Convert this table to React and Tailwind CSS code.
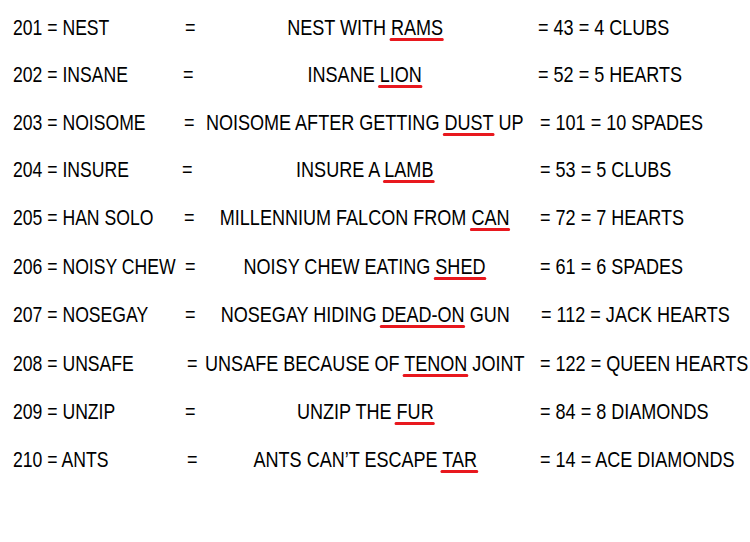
import React from "react";

const rows = [
  { label: "201 = NEST", lw: "w-[172px]", mt: "", mid: ["NEST WITH ", "RAMS", ""], rp: "pl-[3px]", right: "= 43 = 4 CLUBS" },
  { label: "202 = INSANE", lw: "w-[170px]", mt: "-mt-px", mid: ["INSANE ", "LION", ""], rp: "pl-[3px]", right: "= 52 = 5 HEARTS" },
  { label: "203 = NOISOME", lw: "w-[171px]", mt: "", mid: ["NOISOME AFTER GETTING ", "DUST", " UP"], rp: "pl-[5px]", right: "= 101 = 10 SPADES" },
  { label: "204 = INSURE", lw: "w-[169px]", mt: "-mt-px", mid: ["INSURE A ", "LAMB", ""], rp: "pl-[5px]", right: "= 53 = 5 CLUBS" },
  { label: "205 = HAN SOLO", lw: "w-[171px]", mt: "", mid: ["MILLENNIUM FALCON FROM ", "CAN", ""], rp: "pl-[5px]", right: "= 72 = 7 HEARTS" },
  { label: "206 = NOISY CHEW", lw: "w-[172px]", mt: "mt-px", mid: ["NOISY CHEW EATING ", "SHED", ""], rp: "pl-[5px]", right: "= 61 = 6 SPADES" },
  { label: "207 = NOSEGAY", lw: "w-[172px]", mt: "", mid: ["NOSEGAY HIDING ", "DEAD-ON", " GUN"], rp: "pl-[6px]", right: "= 112 = JACK HEARTS" },
  { label: "208 = UNSAFE", lw: "w-[174px]", mt: "mt-px", mid: ["UNSAFE BECAUSE OF ", "TENON", " JOINT"], rp: "pl-[5px]", right: "= 122 = QUEEN HEARTS" },
  { label: "209 = UNZIP", lw: "w-[172px]", mt: "", mid: ["UNZIP THE ", "FUR", ""], rp: "pl-[5px]", right: "= 84 = 8 DIAMONDS" },
  { label: "210 = ANTS", lw: "w-[174px]", mt: "", mid: ["ANTS CAN\u2019T ESCAPE ", "TAR", ""], rp: "pl-[5px]", right: "= 14 = ACE DIAMONDS" },
];

function Underlined({ children }) {
  return (
    <span className="relative">
      {children}
      <span className="absolute left-[-2px] right-[-1px] top-[23px] h-[3px] rounded-full bg-[#e8181e]" />
    </span>
  );
}

export default function App() {
  return (
    <div className="w-[750px] h-[542px] bg-white text-black overflow-hidden pt-[4px] font-['Liberation_Sans',Arial,sans-serif]">
      {rows.map((r, i) => (
        <div key={i} className={`grid grid-cols-[195px_340px_1fr] h-[48px] leading-[48px] text-[22px] whitespace-nowrap ${r.mt}`}>
          <div className="flex pl-[13px]">
            <span className={`${r.lw} shrink-0`}>
              <span className="inline-block origin-left scale-x-[0.8]">{r.label}</span>
            </span>
            <span className="inline-block origin-left scale-x-[0.82]">=</span>
          </div>
          <div className="flex justify-center">
            <span className="inline-block origin-center scale-x-[0.82]">
              {r.mid[0]}
              <Underlined>{r.mid[1]}</Underlined>
              {r.mid[2]}
            </span>
          </div>
          <div className={r.rp}>
            <span className="inline-block origin-left scale-x-[0.82]">{r.right}</span>
          </div>
        </div>
      ))}
    </div>
  );
}
